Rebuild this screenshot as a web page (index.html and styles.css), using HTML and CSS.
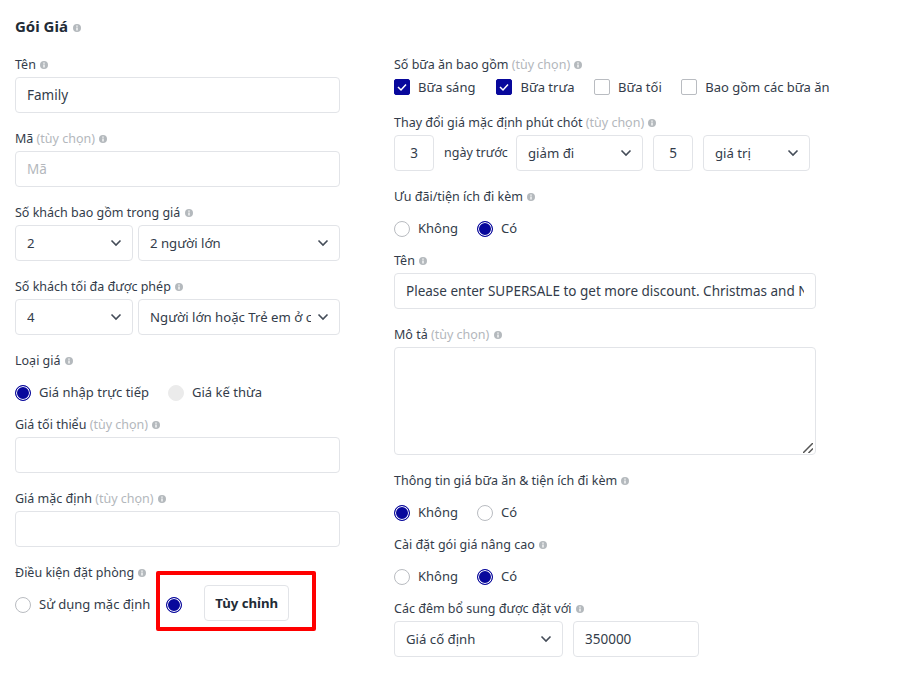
FILE: index.html
```html
<!DOCTYPE html>
<html lang="vi">
<head>
  <meta charset="UTF-8" />
  <title>Gói Giá</title>
  <link rel="stylesheet" href="styles.css">
</head>
<body>
  <svg class="defs" width="0" height="0">
    <symbol id="info" viewBox="0 0 16 16">
      <path fill-rule="evenodd" d="M8 0a8 8 0 1 1 0 16A8 8 0 0 1 8 0zM6.7 3.2h2.6v2.3H6.7zM6.7 7h2.6v5.8H6.7z"/>
    </symbol>
  </svg>

  <h2 class="title">Gói Giá <svg class="info"><use href="#info"/></svg></h2>

  <div class="columns">
    <div class="col col-left">
      <div class="field">
        <label>Tên <svg class="info"><use href="#info"/></svg></label>
        <input type="text" class="wide" value="Family" />
      </div>
      <div class="field">
        <label>Mã <span class="opt">(tùy chọn)</span> <svg class="info"><use href="#info"/></svg></label>
        <input type="text" class="wide" placeholder="Mã" />
      </div>
      <div class="field">
        <label>Số khách bao gồm trong giá <svg class="info"><use href="#info"/></svg></label>
        <div class="row tight">
          <select class="w-118"><option>2</option></select>
          <select class="w-202"><option>2 người lớn</option></select>
        </div>
      </div>
      <div class="field">
        <label>Số khách tối đa được phép <svg class="info"><use href="#info"/></svg></label>
        <div class="row tight">
          <select class="w-118"><option>4</option></select>
          <select class="w-202"><option>Người lớn hoặc Trẻ em ở cùng</option></select>
        </div>
      </div>
      <div class="field-radio">
        <label>Loại giá <svg class="info"><use href="#info"/></svg></label>
        <div class="choices">
          <label class="choice"><input type="radio" name="type" checked /> Giá nhập trực tiếp</label>
          <label class="choice"><input type="radio" name="type" disabled /> Giá kế thừa</label>
        </div>
      </div>
      <div class="field">
        <label>Giá tối thiểu <span class="opt">(tùy chọn)</span> <svg class="info"><use href="#info"/></svg></label>
        <input type="text" class="wide" />
      </div>
      <div class="field">
        <label>Giá mặc định <span class="opt">(tùy chọn)</span> <svg class="info"><use href="#info"/></svg></label>
        <input type="text" class="wide" />
      </div>
      <div class="field-radio">
        <label>Điều kiện đặt phòng <svg class="info"><use href="#info"/></svg></label>
        <div class="choices">
          <label class="choice choice-short"><input type="radio" name="cond" /> Sử dụng mặc định</label>
          <div class="highlight">
            <input type="radio" name="cond" checked />
            <button type="button" class="custom-btn">Tùy chỉnh</button>
          </div>
        </div>
      </div>
    </div>

    <div class="col col-right">
      <div class="field-check">
        <label>Số bữa ăn bao gồm <span class="opt">(tùy chọn)</span> <svg class="info"><use href="#info"/></svg></label>
        <div class="checks">
          <label class="choice"><input type="checkbox" checked /> Bữa sáng</label>
          <label class="choice"><input type="checkbox" checked /> Bữa trưa</label>
          <label class="choice"><input type="checkbox" /> Bữa tối</label>
          <label class="choice"><input type="checkbox" /> Bao gồm các bữa ăn</label>
        </div>
      </div>
      <div class="field">
        <label>Thay đổi giá mặc định phút chót <span class="opt">(tùy chọn)</span> <svg class="info"><use href="#info"/></svg></label>
        <div class="row">
          <input type="text" class="w-40" value="3" />
          <span class="unit">ngày trước</span>
          <select class="w-127"><option>giảm đi</option></select>
          <input type="text" class="w-40" value="5" />
          <select class="w-107"><option>giá trị</option></select>
        </div>
      </div>
      <div class="field-radio">
        <label>Ưu đãi/tiện ích đi kèm <svg class="info"><use href="#info"/></svg></label>
        <div class="choices">
          <label class="choice"><input type="radio" name="perk" /> Không</label>
          <label class="choice"><input type="radio" name="perk" checked /> Có</label>
        </div>
      </div>
      <div class="field">
        <label>Tên <svg class="info"><use href="#info"/></svg></label>
        <input type="text" class="wide" value="Please enter SUPERSALE to get more discount. Christmas and New Year" />
      </div>
      <div class="field">
        <label>Mô tả <span class="opt">(tùy chọn)</span> <svg class="info"><use href="#info"/></svg></label>
        <div class="textarea-wrap">
          <textarea class="wide"></textarea>
        </div>
      </div>
      <div class="field-radio">
        <label>Thông tin giá bữa ăn &amp; tiện ích đi kèm <svg class="info"><use href="#info"/></svg></label>
        <div class="choices">
          <label class="choice"><input type="radio" name="meal" checked /> Không</label>
          <label class="choice"><input type="radio" name="meal" /> Có</label>
        </div>
      </div>
      <div class="field-radio">
        <label>Cài đặt gói giá nâng cao <svg class="info"><use href="#info"/></svg></label>
        <div class="choices">
          <label class="choice"><input type="radio" name="adv" /> Không</label>
          <label class="choice"><input type="radio" name="adv" checked /> Có</label>
        </div>
      </div>
      <div class="field">
        <label>Các đêm bổ sung được đặt với <svg class="info"><use href="#info"/></svg></label>
        <div class="row">
          <select class="w-169"><option>Giá cố định</option></select>
          <input type="text" class="w-126" value="350000" />
        </div>
      </div>
    </div>
  </div>
</body>
</html>
```

FILE: styles.css
```css
*, *::after {
  box-sizing: border-box;
}
body {
  margin: 0;
  padding: 0 15px;
  background: #fff;
  color: #333c4a;
  font-family: "Noto Sans", sans-serif;
  font-size: 12.5px;
  line-height: 20px;
}
.defs {
  position: absolute;
}
.title {
  margin: 0;
  height: 54px;
  padding-top: 16px;
  font-size: 15px;
  font-weight: 700;
  color: #222b36;
}
.info {
  width: 8px;
  height: 8px;
  margin-left: 1px;
  fill: #b4b9bd;
}
.columns {
  display: flex;
  gap: 54px;
}
.col-left {
  width: 325px;
}
.col-right {
  width: 422px;
}
label {
  display: block;
}
.field > label, .field-radio > label, .field-check > label {
  height: 20px;
  padding-top: 1px;
}
.field {
  margin-bottom: 15px;
}
.field > label {
  margin-bottom: 3px;
}
.opt {
  color: #b3b7bc;
}
input[type="text"], select, textarea {
  display: block;
  height: 36px;
  padding: 0 11px;
  border: 1px solid #e2e4e8;
  border-radius: 4px;
  background-color: #fff;
  color: #333c4a;
  font-family: inherit;
  font-size: 13.5px;
}
input::placeholder {
  color: #b3b7bc;
}
select {
  appearance: none;
  padding-right: 28px;
  font-size: 13.2px;
  background-image: url("data:image/svg+xml,%3Csvg xmlns='http://www.w3.org/2000/svg' width='12' height='8' viewBox='0 0 12 8'%3E%3Cpath d='M1.5 1.5 6 6l4.500-4.500' fill='none' stroke='%23444c58' stroke-width='1.600'/%3E%3C/svg%3E");
  background-repeat: no-repeat;
  background-position: right 10px center;
}
textarea {
  height: 108px;
  resize: none;
}
.textarea-wrap {
  position: relative;
  height: 108px;
}
.textarea-wrap::after {
  content: "";
  position: absolute;
  right: 3px;
  bottom: 2px;
  width: 10px;
  height: 10px;
  background: url("data:image/svg+xml,%3Csvg xmlns='http://www.w3.org/2000/svg' width='10' height='10' viewBox='0 0 10 10'%3E%3Cpath d='M0 10 10 0M5.500 10 10 5.500' fill='none' stroke='%23555' stroke-width='1.500'/%3E%3C/svg%3E") no-repeat;
}
.wide {
  width: 100%;
}
.w-40 {
  width: 40px;
  text-align: center;
}
.w-107 {
  width: 107px;
}
.w-118 {
  width: 118px;
}
.w-126 {
  width: 126px;
}
.w-127 {
  width: 127px;
}
.w-169 {
  width: 169px;
}
.w-202 {
  width: 202px;
}
.row {
  display: flex;
  align-items: center;
  gap: 10px;
}
.row.tight {
  gap: 5px;
}
.unit {
  width: 62px;
  white-space: nowrap;
}
.choices {
  display: flex;
  align-items: center;
  gap: 19px;
  height: 44px;
}
.checks {
  display: flex;
  align-items: center;
  gap: 19.5px;
  height: 26px;
  margin-bottom: 12px;
}
.checks .choice:first-child {
  margin-right: 1.5px;
}
.choice {
  display: flex;
  align-items: center;
  gap: 8px;
  font-size: 13px;
  white-space: nowrap;
}
.choice-short {
  margin-right: -3px;
}
input[type="radio"], input[type="checkbox"] {
  appearance: none;
  flex: none;
  width: 16px;
  height: 16px;
  margin: 0;
  border: 1px solid #b9bcc1;
  background: #fff;
}
input[type="radio"] {
  margin-top: 2px;
  border-radius: 50%;
}
input[type="radio"]:checked {
  border-color: #08089c;
  background: #08089c;
  box-shadow: inset 0 0 0 1px #fff;
}
input[type="radio"]:disabled {
  border-color: #ebebeb;
  background: #ebebeb;
}
input[type="checkbox"] {
  border-radius: 2px;
}
input[type="checkbox"]:checked {
  border-color: #08089c;
  background: #08089c url("data:image/svg+xml,%3Csvg xmlns='http://www.w3.org/2000/svg' width='14' height='14' viewBox='0 0 14 14'%3E%3Cpath d='M3 7l3 3 5-5.500' fill='none' stroke='%23fff' stroke-width='1.500'/%3E%3C/svg%3E") center no-repeat;
}
.highlight {
  position: relative;
  display: flex;
  align-items: center;
  gap: 22px;
}
.highlight::after {
  content: "";
  position: absolute;
  left: -10px;
  right: -27px;
  top: -14px;
  height: 60px;
  border: 4px solid #ff0000;
  border-radius: 2px;
  pointer-events: none;
}
.custom-btn {
  width: 85px;
  height: 36px;
  margin-bottom: 2px;
  padding: 0;
  border: 1px solid #e2e4e8;
  border-radius: 4px;
  background: #fff;
  color: #222b36;
  font-family: inherit;
  font-size: 13.2px;
  font-weight: 700;
}
```
